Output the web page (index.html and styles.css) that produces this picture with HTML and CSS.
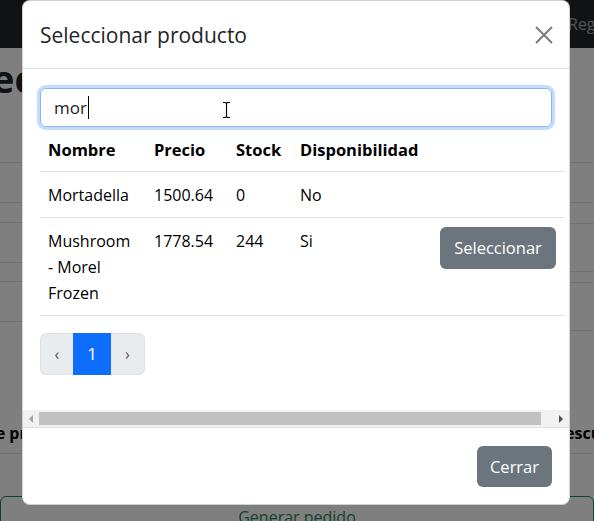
FILE: index.html
```html
<!DOCTYPE html>
<html lang="es">
<head>
<meta charset="utf-8">
<title>Seleccionar producto</title>
<link rel="stylesheet" href="styles.css">
</head>
<body>
<div class="site">
  <nav class="navbar"><span class="nav-link">Registrarse</span></nav>
  <main class="content">
    <h1 class="page-title">Seleccionar productos</h1>
    <div class="bg-form">
      <div class="bg-col">
        <div class="f-input"></div>
        <div class="f-input gap20"></div>
        <div class="f-input gap19"></div>
      </div>
      <div class="bg-col">
        <div class="f-input"></div>
        <div class="f-input tall gap21"></div>
        <div class="f-input tall gap11"></div>
      </div>
    </div>
    <div class="bg-thead"><span class="th-left">Nombre de producto</span><span class="th-right">Descuento</span></div>
    <div class="bg-btn">Generar pedido</div>
  </main>
</div>
<div class="modal">
  <div class="modal-header">
    <h5 class="modal-title">Seleccionar producto</h5>
    <svg class="btn-close" width="18" height="18" viewBox="0 0 18 18"><path d="M1 1 L17 17 M17 1 L1 17" stroke="#7b7b7b" stroke-width="2" fill="none"/></svg>
  </div>
  <div class="modal-body">
    <div class="body-inner">
      <div class="search"><span class="search-text">mor</span><span class="caret"></span>
        <svg class="ibeam" width="9" height="18" viewBox="0 0 9 18"><path d="M1 1.5 H3.5 L4.5 2.5 L5.5 1.5 H8 M4.5 2.5 V15.5 M1 16.5 H3.5 L4.5 15.5 L5.5 16.5 H8" stroke="#000" stroke-width="1.1" fill="none"/></svg>
      </div>
      <table class="table">
        <colgroup><col class="c-name"><col class="c-price"><col class="c-stock"><col class="c-disp"><col class="c-act"></colgroup>
        <thead>
          <tr><th>Nombre</th><th>Precio</th><th>Stock</th><th>Disponibilidad</th><th></th></tr>
        </thead>
        <tbody>
          <tr><td>Mortadella</td><td>1500.64</td><td>0</td><td>No</td><td></td></tr>
          <tr><td>Mushroom - Morel Frozen</td><td>1778.54</td><td>244</td><td>Si</td><td><span class="btn btn-secondary btn-select">Seleccionar</span></td></tr>
        </tbody>
      </table>
      <ul class="pagination">
        <li class="page-item disabled"><span class="page-link">&lsaquo;</span></li>
        <li class="page-item active"><span class="page-link">1</span></li>
        <li class="page-item disabled"><span class="page-link">&rsaquo;</span></li>
      </ul>
    </div>
    <div class="hscroll">
      <div class="hs-arrow left"><span class="tri-left"></span></div>
      <div class="hs-track"><div class="hs-thumb"></div></div>
      <div class="hs-arrow right"><span class="tri-right"></span></div>
    </div>
  </div>
  <div class="modal-footer">
    <span class="btn btn-secondary btn-close-footer">Cerrar</span>
  </div>
</div>
</body>
</html>
```
FILE: styles.css
```css
* { box-sizing: border-box; }
html, body { margin: 0; padding: 0; }
body {
  width: 594px;
  height: 521px;
  overflow: hidden;
  position: relative;
  background: #fff;
  color: #212529;
  font-family: "Open Sans", "Noto Sans", sans-serif;
  font-size: 16px;
}
.site {
  width: 594px;
  height: 521px;
  overflow: hidden;
  background: #fff;
  color: #212529;
}
.navbar {
  height: 48px;
  background: #212529;
  display: flex;
  align-items: center;
  padding-left: 568px;
  white-space: nowrap;
  overflow: hidden;
}
.nav-link { color: rgba(255, 255, 255, .6); font-size: 16px; }
.content { overflow: hidden; height: 473px; }
.page-title {
  margin: 0 0 0 -63px;
  padding-top: 8px;
  font-size: 38px;
  line-height: 44px;
  font-weight: 700;
  white-space: nowrap;
}
.bg-form {
  display: grid;
  grid-template-columns: 1fr 1fr;
  gap: 24px;
  margin: 62px -20px 0;
}
.bg-col { display: flex; flex-direction: column; }
.f-input { height: 41px; border: 1px solid #dee2e6; border-radius: 6px; }
.f-input.tall { height: 49px; }
.gap20 { margin-top: 19px; }
.gap19 { margin-top: 18px; }
.gap21 { margin-top: 20px; }
.gap11 { margin-top: 10px; }
.bg-thead {
  display: flex;
  justify-content: space-between;
  margin-top: 90px;
  padding-bottom: 8px;
  border-bottom: 1px solid #dee2e6;
  font-weight: 700;
  color: #000;
  white-space: nowrap;
  line-height: 24px;
}
.th-left { margin-left: -84px; }
.th-right { margin-right: -44px; }
.bg-btn {
  margin-top: 42px;
  border: 1px solid #198754;
  border-radius: 6px;
  color: #198754;
  text-align: center;
  line-height: 24px;
  padding: 8px 12px 6px;
}
/* the modal dims the page behind it with a 50% black backdrop drawn as a spread shadow */
.modal {
  position: absolute;
  z-index: 20;
  left: 22px;
  top: 0;
  width: 548px;
  background: #fff;
  border: 1px solid rgba(0, 0, 0, .175);
  border-radius: 8px;
  overflow: hidden;
  box-shadow: 0 0 0 1200px rgba(0, 0, 0, .5);
}
.modal-header {
  height: 68px;
  border-bottom: 1px solid #dee2e6;
  display: flex;
  align-items: center;
  justify-content: space-between;
  padding: 0 16px 0 17px;
}
.modal-title {
  margin: 0;
  font-size: 21px;
  font-weight: 500;
  line-height: 30px;
  color: #212529;
}
.btn-close { display: block; }
.modal-body { overflow: hidden; }
.body-inner { padding: 19px 0 35px 17px; }
.search {
  position: relative;
  width: 512px;
  height: 39px;
  border: 1px solid #86b7fe;
  border-radius: 6px;
  box-shadow: 0 0 0 3px rgba(13, 110, 253, .25);
  display: flex;
  align-items: center;
  padding-left: 13px;
  font-size: 17px;
  color: #212529;
}
.caret { width: 1px; height: 23px; background: #000; margin-left: 1px; }
.ibeam { position: absolute; left: 181px; top: 12px; }
.table {
  width: 525px;
  table-layout: fixed;
  border-collapse: collapse;
  margin-bottom: 17px;
  font-size: 16px;
  color: #000;
}
.c-name { width: 106px; }
.c-price { width: 82px; }
.c-stock { width: 64px; }
.c-disp { width: 140px; }
.c-act { width: 133px; }
.table th, .table td {
  padding: 10px 8px 9px;
  line-height: 26px;
  text-align: left;
  vertical-align: top;
  border-bottom: 1px solid #dee2e6;
}
.table th { font-weight: 700; font-size: 16.5px; padding-bottom: 8px; }
.btn {
  display: inline-block;
  border-radius: 6px;
  padding: 8px 0;
  line-height: 25px;
  font-size: 16.5px;
  text-align: center;
}
.btn-secondary { background: #6c757d; color: #fff; }
.btn-select { margin-top: -1px; line-height: 26px; width: 116px; }
.btn-close-footer { width: 75px; }
.pagination {
  list-style: none;
  margin: 0;
  padding: 0;
  display: flex;
}
.page-link {
  display: block;
  height: 42px;
  line-height: 40px;
  text-align: center;
  border: 1px solid #dee2e6;
  font-size: 17px;
}
.page-item:first-child .page-link { width: 33px; border-radius: 6px 0 0 6px; border-right: 0; }
.page-item:last-child .page-link { width: 34px; border-radius: 0 6px 6px 0; border-left: 0; }
.page-item.disabled .page-link { background: #e9ecef; color: #555; font-size: 16px; }
.page-item.active .page-link { width: 38px; background: #0d6efd; border-color: #0d6efd; color: #fff; }
.hscroll {
  display: flex;
  height: 17px;
  background: #f1f1f1;
}
.hs-arrow { width: 16px; display: flex; align-items: center; justify-content: center; }
.hs-track { flex: 1; padding: 2px 0; }
.hs-thumb { width: 502px; height: 13px; background: #c1c1c1; }
.tri-left { width: 0; height: 0; border-top: 4px solid transparent; border-bottom: 4px solid transparent; border-right: 4px solid #a3a3a3; }
.tri-right { width: 0; height: 0; border-top: 4px solid transparent; border-bottom: 4px solid transparent; border-left: 4px solid #505050; }
.modal-footer {
  border-top: 1px solid #dee2e6;
  display: flex;
  justify-content: flex-end;
  padding: 18px 17px 17px;
}
```
